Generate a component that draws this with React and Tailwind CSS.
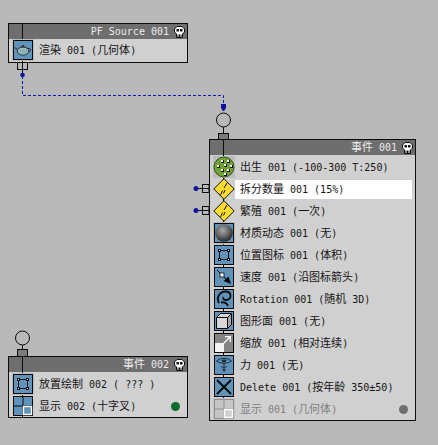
import React from "react";

const BLUE = "#5f93b9";

function Mixed({ text }) {
  // latin is 6px wide, cjk runs a bit bigger like the old bitmap font
  const parts = text.split(/([\u2E80-\u9FFF]+)/);
  return parts.map((p, i) =>
    /[\u2E80-\u9FFF]/.test(p) ? (
      <span key={i} className="text-[11px]">
        {p}
      </span>
    ) : (
      <span key={i}>{p}</span>
    ),
  );
}

function Skull() {
  return (
    <svg width="11" height="12" viewBox="0 0 11 12" className="shrink-0">
      <path d="M3 0.5h5l2.5 2.5v3l-2 2v3.5h-6v-3.5l-2-2v-3z" fill="#fff" stroke="#111" />
      <rect x="2.5" y="3" width="2.5" height="2.5" fill="#111" />
      <rect x="6" y="3" width="2.5" height="2.5" fill="#111" />
      <path d="M4 8.5v3M5.5 8.5v3M7 8.5v3" stroke="#111" />
    </svg>
  );
}

function Frame({ halo, children }) {
  return (
    <svg width="22" height="22" viewBox="0 0 22 22" className="relative z-10 shrink-0">
      {halo ? <rect width="22" height="22" fill="#bcbcbc" /> : null}
      <rect x="1.5" y="1.5" width="19" height="19" fill={BLUE} stroke="#0a0a0a" />
      {children}
    </svg>
  );
}

function Birth() {
  const dots = [[8, 4], [14, 4], [4, 9], [11, 8], [17, 9], [8, 13], [14, 13], [11, 17]];
  return (
    <svg width="22" height="22" viewBox="0 0 22 22" className="relative z-10 shrink-0">
      <rect width="22" height="22" fill="#bcbcbc" />
      <circle cx="11" cy="11" r="10" fill="#6fa52f" stroke="#3c4a35" />
      {dots.map(([x, y], i) => (
        <g key={i}>
          <rect x={x} y={y} width="3" height="3" fill="#111" />
          <rect x={x} y={y} width="2" height="2" fill="#fff" />
        </g>
      ))}
    </svg>
  );
}

function Diamond() {
  return (
    <svg width="22" height="22" viewBox="0 0 22 22" className="relative z-10 shrink-0">
      <path d="M11 0.7L21.2 11L11 21.3L0.8 11z" fill="#fbdc2e" stroke="#111" />
      <path d="M14 5L11 10M9.5 12.5L7.5 17" stroke="#111" fill="none" />
      <path d="M12 12L10.5 15.5" stroke="#111" />
    </svg>
  );
}

function Sphere() {
  return (
    <Frame halo>
      <defs>
        <radialGradient id="ball" cx="0.42" cy="0.35" r="0.7">
          <stop offset="0" stopColor="#a8a8a8" />
          <stop offset="0.5" stopColor="#686868" />
          <stop offset="1" stopColor="#1e1e1e" />
        </radialGradient>
      </defs>
      <circle cx="11" cy="11" r="8.8" fill="url(#ball)" />
    </Frame>
  );
}

function Position({ halo }) {
  return (
    <Frame halo={halo}>
      <rect x="6.5" y="6.5" width="9" height="9" fill="none" stroke="#0a0a0a" />
      {[[5, 5], [14, 5], [5, 14], [14, 14]].map(([x, y], i) => (
        <g key={i}>
          <rect x={x} y={y} width="3" height="3" fill="#0a0a0a" />
          <rect x={x + 1} y={y + 1} width="1" height="1" fill="#fff" />
        </g>
      ))}
    </Frame>
  );
}

function Speed() {
  return (
    <Frame>
      <path d="M4 4L14 14" stroke="#0a0a0a" />
      <path d="M10.5 15L15.5 10.5L18 18z" fill="#0a0a0a" />
      <rect x="7" y="7" width="4" height="4" fill="#fff" stroke="#0a0a0a" strokeWidth="0.8" />
    </Frame>
  );
}

function Rotation() {
  return (
    <Frame>
      <path
        d="M6 15C3 9 7 3.5 12.5 3.5C19 3.5 19 11 13.5 12C11 12.4 9.5 11 10.5 9"
        fill="none"
        stroke="#0a0a0a"
        strokeWidth="1.8"
      />
      <path d="M8 14.5C11.5 14 14 15 15 18" fill="none" stroke="#0a0a0a" strokeWidth="1.8" />
    </Frame>
  );
}

function Cube() {
  return (
    <Frame>
      <path d="M3.5 7.5L7.5 3.5H18.5V14.5L14.5 18.5H3.5z" fill="#d8d8d8" stroke="#0a0a0a" />
      <path d="M14.5 7.5L18.5 3.5V14.5L14.5 18.5z" fill="#a6a6a6" stroke="#0a0a0a" />
      <path d="M3.5 7.5H14.5V18.5" fill="none" stroke="#0a0a0a" />
    </Frame>
  );
}

function Scale() {
  return (
    <Frame>
      <rect x="2" y="2" width="18" height="18" fill="#848484" />
      <rect x="2" y="11" width="9" height="9" fill="#f4f4f4" />
      <path d="M10 12L17 5M12 4.7h5.3V10" fill="none" stroke="#fff" strokeWidth="1.2" />
    </Frame>
  );
}

function Force() {
  return (
    <Frame>
      <path d="M3.5 7C8 3.5 14 3.5 18.5 7C14 10 8 10 3.5 7z" fill="none" stroke="#20303c" />
      <ellipse cx="11" cy="6.8" rx="2.5" ry="1.6" fill="#20303c" />
      <path d="M11 9V17M8 12C9 14 13 14 14 12M9.5 15L11 17.5L12.5 15" fill="none" stroke="#20303c" />
    </Frame>
  );
}

function Cross() {
  return (
    <Frame>
      <path d="M4 4L18 18M18 4L4 18" stroke="#0a0a0a" strokeWidth="2" />
    </Frame>
  );
}

function Display({ off }) {
  const line = off ? "#8f8f8f" : "#0a0a0a";
  return (
    <svg width="22" height="22" viewBox="0 0 22 22" className="relative z-10 shrink-0">
      {off ? <rect width="22" height="22" fill="#c4c4c4" /> : null}
      <rect x="1.5" y="1.5" width="19" height="19" fill={off ? "#c6c6c6" : BLUE} stroke={line} />
      <path d="M11 2V20M2 11H20" stroke={line} />
      <rect x="11.5" y="11.5" width="8" height="8" fill={off ? "#d0d0d0" : BLUE} stroke="#fff" strokeWidth="1.4" />
    </svg>
  );
}

function Teapot() {
  return (
    <Frame halo>
      <path d="M6 11L2.5 8.5M15 10C18 8.5 19 10 18 12C17.5 13 16 13.5 15 13.5" fill="none" stroke="#222" />
      <ellipse cx="11" cy="12" rx="5.8" ry="4.2" fill="#8db2b3" stroke="#2c3a3c" />
      <path d="M6.5 9.5C8.5 7.8 13.5 7.8 15.5 9.5" fill="#bcd0cf" stroke="#2c3a3c" />
      <rect x="10" y="6" width="2" height="2" fill="#333" />
    </Frame>
  );
}

function Row({ icon, label, selected, disabled, dot }) {
  return (
    <div className="flex h-[22px] items-center">
      {icon}
      <div
        className={`mr-[3px] flex h-[19px] flex-1 items-center pl-[5px] pr-[4px] ${
          selected ? "bg-white" : ""
        } ${disabled ? "text-[#7f7f7f]" : "text-[#151515]"}`}
      >
        <span className="whitespace-pre">
          <Mixed text={label} />
        </span>
        {dot ? <span className={`ml-auto h-[9px] w-[9px] rounded-full ${dot}`} /> : null}
      </div>
    </div>
  );
}

function Panel({ className, title, rows, wireHeight, tight }) {
  return (
    <div className={`absolute border border-[#0c0c0c] bg-[#d0d0d0] ${className}`}>
      <div className="flex h-[15px] items-center justify-end gap-[5px] bg-[#6e6e6e] pr-[2px] text-[#ececec]">
        <span className="whitespace-pre">
          <Mixed text={title} />
        </span>
        <Skull />
      </div>
      <div className="absolute left-[13px] top-0 w-[1px] bg-[#0c0c0c]" style={{ height: wireHeight }} />
      <div className={tight ? "pl-[3px]" : "pl-[3px] pt-[1px]"}>{rows}</div>
    </div>
  );
}

export default function App() {
  return (
    <div className="relative h-[445px] w-[438px] overflow-hidden bg-[#b9b9b9] font-['DejaVu_Sans_Mono','Noto_Sans_CJK_SC',monospace] text-[10px] leading-none">
      {/* wires and ports between the nodes */}
      <svg width="438" height="445" className="absolute left-0 top-0">
        <path d="M22.5 62V75" stroke="#0c0c0c" />
        <rect x="17.5" y="62.5" width="5" height="7" fill="none" stroke="#0c0c0c" />
        <rect x="22.5" y="62.5" width="5" height="7" fill="none" stroke="#0c0c0c" />
        <path d="M22.5 76V95.5H223.5V104" fill="none" stroke="#1414b4" strokeDasharray="3 2" />
        <path d="M22.5 72L25 74.5L24 77H23L22.5 79L22 77H21L20 74.5z" fill="#1010a0" />
        <path d="M221 104H226V108L224 111H223L221 108z" fill="#1010a0" />

        <circle cx="223.5" cy="120" r="7" fill="none" stroke="#0c0c0c" />
        <path d="M223.5 127V140" stroke="#0c0c0c" />
        <rect x="218.5" y="133.5" width="10" height="6" fill="#7c7c7c" stroke="#0c0c0c" />

        <circle cx="22.5" cy="338" r="7" fill="none" stroke="#0c0c0c" />
        <path d="M22.5 345V358" stroke="#0c0c0c" />
        <rect x="17.5" y="349.5" width="10" height="7" fill="#7c7c7c" stroke="#0c0c0c" />

        {[188.5, 210.5].map((y) => (
          <g key={y}>
            <path d={`M196 ${y}H213`} stroke="#0c0c0c" />
            <rect x="202.5" y={y - 4} width="6.5" height="8" fill="none" stroke="#0c0c0c" />
            <circle cx="196" cy={y} r="2.5" fill="#1010a0" />
          </g>
        ))}
      </svg>

      <Panel
        className="left-[8px] top-[23px] h-[40px] w-[180px]"
        title="PF Source 001"
        wireHeight={38}
        tight
        rows={<Row icon={<Teapot />} label="渲染 001 (几何体)" />}
      />

      <Panel
        className="left-[209px] top-[139px] h-[282px] w-[207px]"
        title="事件 001"
        wireHeight={276}
        rows={
          <>
            <Row icon={<Birth />} label="出生 001 (-100-300 T:250)" />
            <Row icon={<Diamond />} label="拆分数量 001 (15%)" selected />
            <Row icon={<Diamond />} label="繁殖 001 (一次)" />
            <Row icon={<Sphere />} label="材质动态 001 (无)" />
            <Row icon={<Position />} label="位置图标 001 (体积)" />
            <Row icon={<Speed />} label="速度 001 (沿图标箭头)" />
            <Row icon={<Rotation />} label="Rotation 001 (随机 3D)" />
            <Row icon={<Cube />} label="图形面 001 (无)" />
            <Row icon={<Scale />} label="缩放 001 (相对连续)" />
            <Row icon={<Force />} label="力 001 (无)" />
            <Row icon={<Cross />} label="Delete 001 (按年龄 350±50)" />
            <Row icon={<Display off />} label="显示 001 (几何体)" disabled dot="bg-[#707070]" />
          </>
        }
      />

      <Panel
        className="left-[8px] top-[356px] h-[62px] w-[180px]"
        title="事件 002"
        wireHeight={60}
        rows={
          <>
            <Row icon={<Position halo />} label="放置绘制 002 ( ??? )" />
            <Row icon={<Display />} label="显示 002 (十字叉)" dot="bg-[#0f6b2a]" />
          </>
        }
      />
    </div>
  );
}
